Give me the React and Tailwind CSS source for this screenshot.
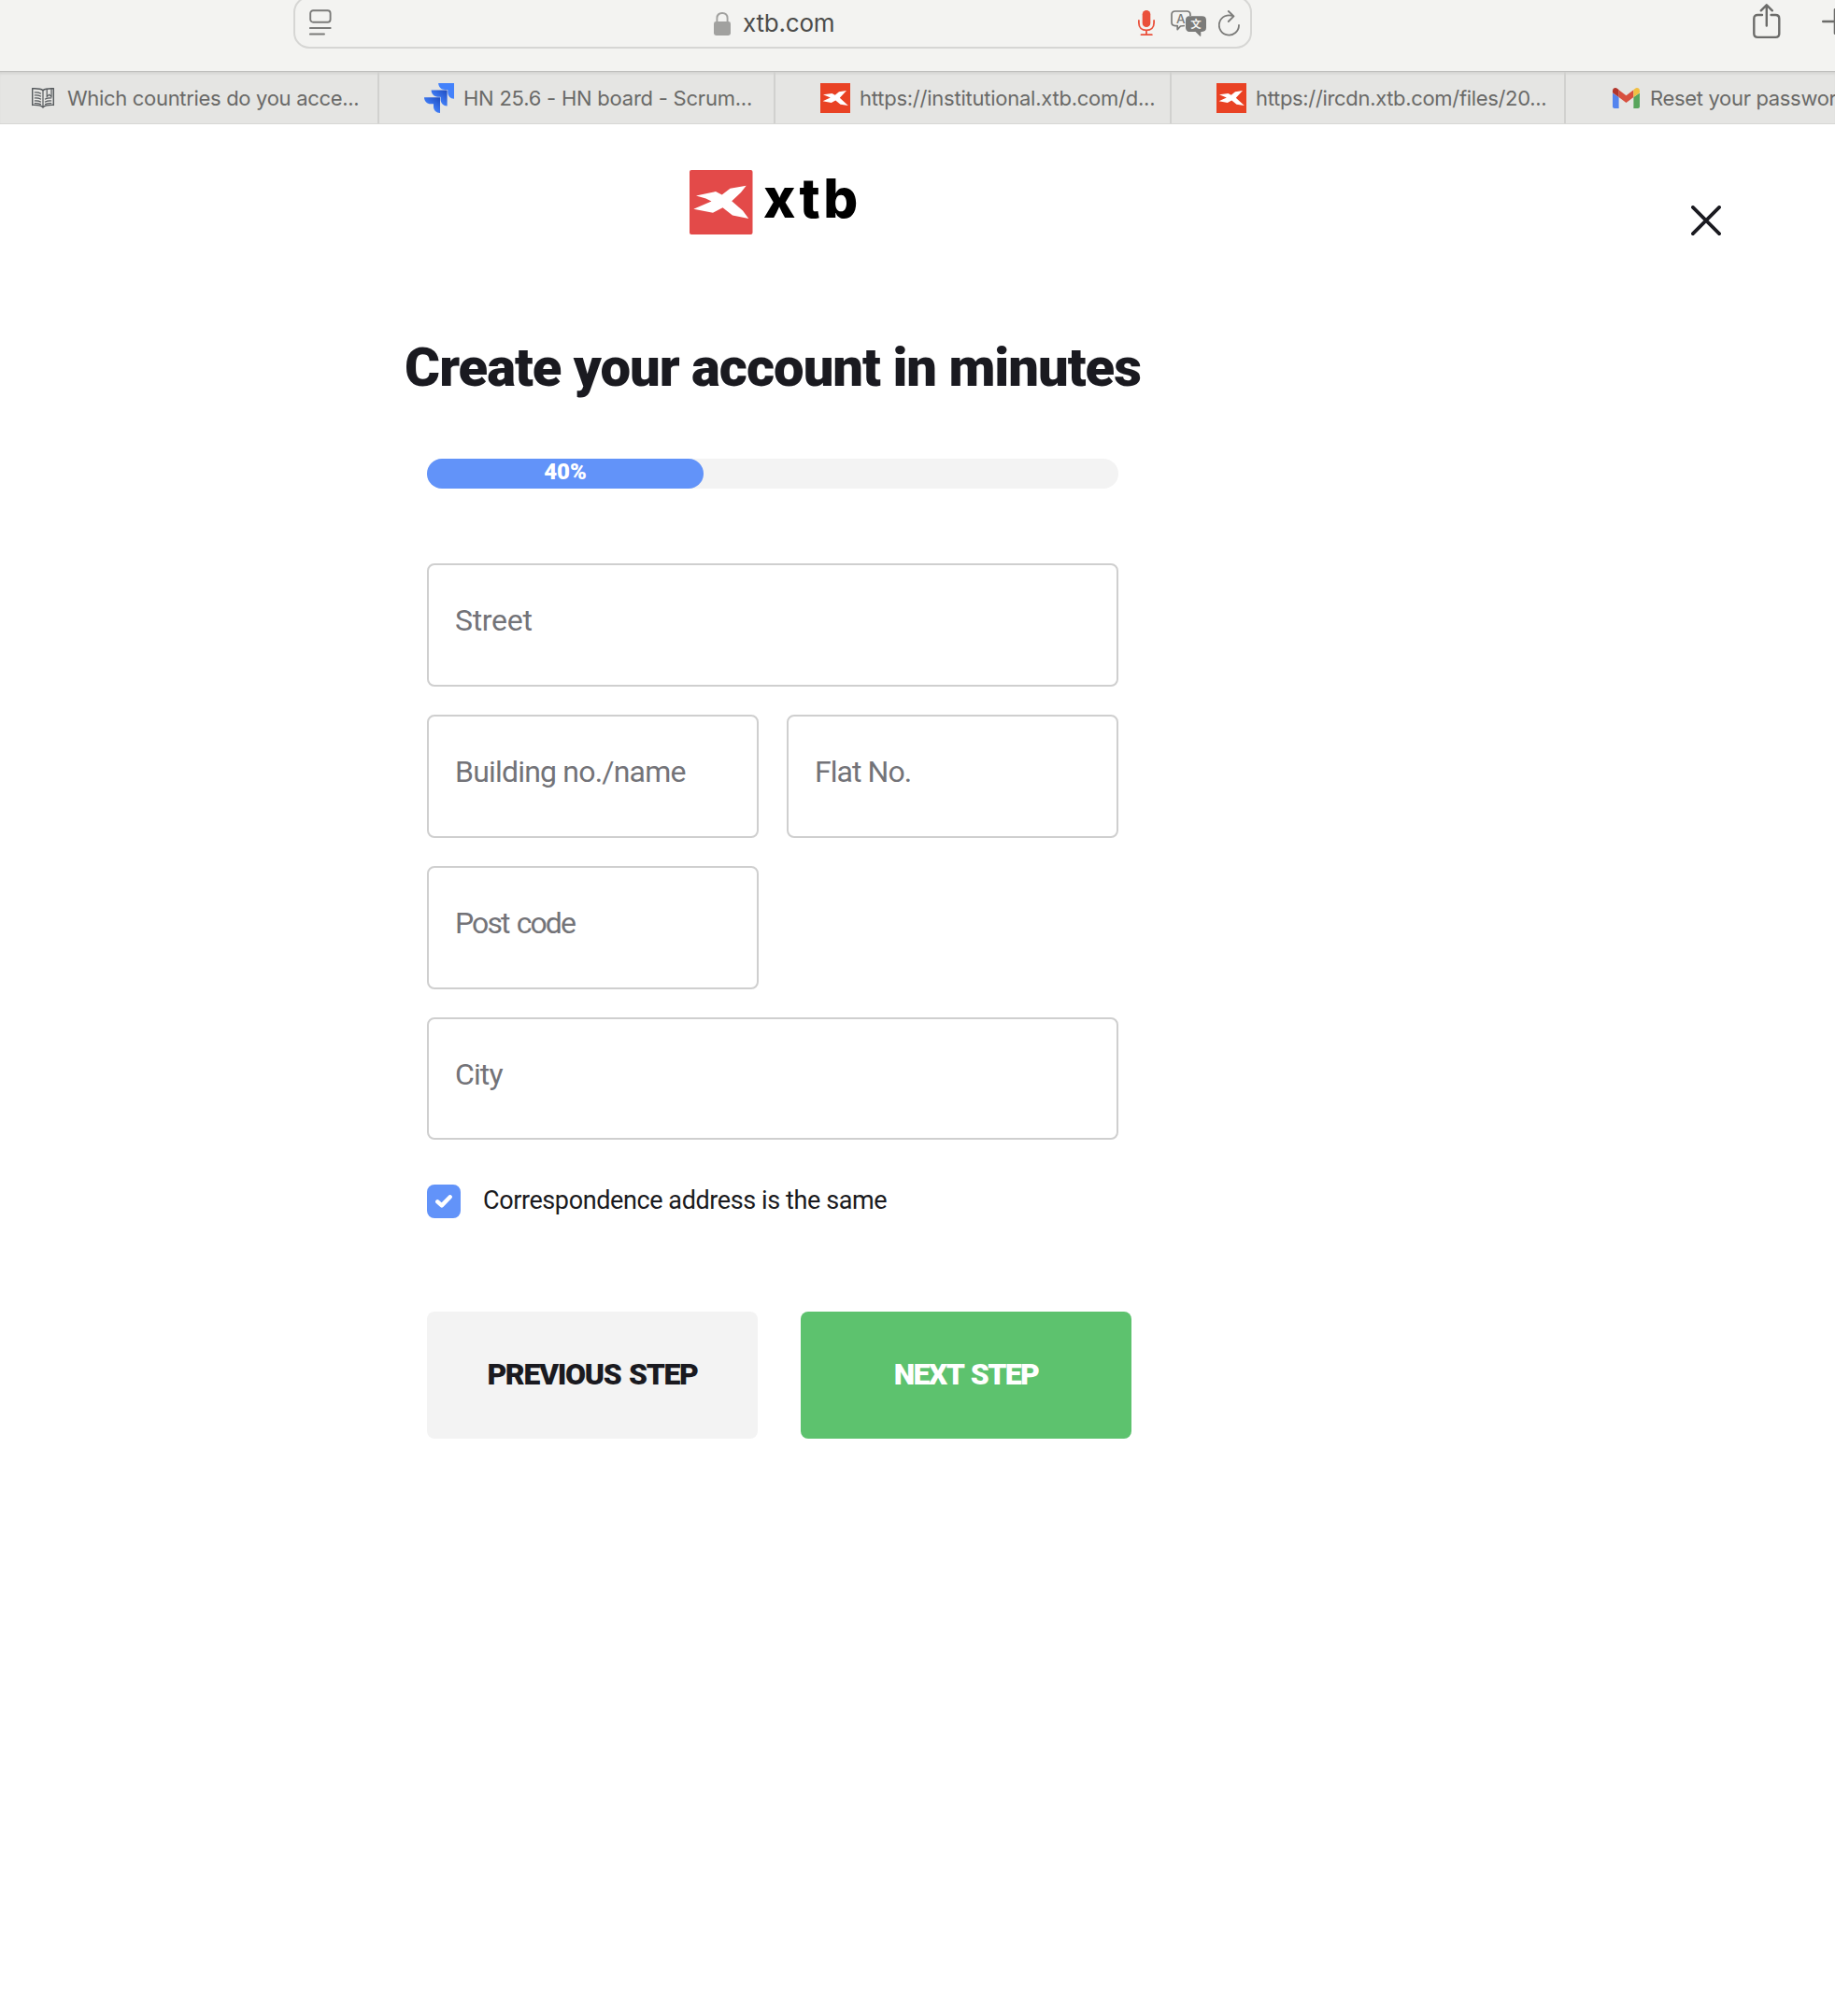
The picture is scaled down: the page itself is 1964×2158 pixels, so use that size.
function ReaderIcon() {
  return (
    <svg width="24" height="28" viewBox="0 0 24 28" fill="none" stroke="#7b7b79" strokeWidth="1.9">
      <rect x="1.2" y="1.2" width="21.4" height="12.6" rx="3" />
      <path d="M0.9 20H22.700M0.9 26.500H16" strokeLinecap="round" />
    </svg>
  );
}

function LockIcon() {
  return (
    <svg width="18" height="25" viewBox="0 0 18 25">
      <path d="M3.4 11.5V6.6C3.4 3 5.8 1 9 1s5.6 2 5.6 5.6v4.9" fill="none" stroke="#a1a19f" strokeWidth="1.9" />
      <rect x="0" y="10" width="18" height="15" rx="2.4" fill="#a1a19f" />
    </svg>
  );
}

function MicIcon() {
  return (
    <svg width="18" height="28" viewBox="0 0 18 28" fill="none" stroke="#ea503b" strokeWidth="1.8" strokeLinecap="round">
      <rect x="4.7" y="0" width="8.6" height="18" rx="4.3" fill="#ea503b" stroke="none" />
      <path d="M0.9 11v2.5C0.9 18.4 4.2 21.400 9 21.400s8.100-3 8.100-7.900V11M9 21.400V26.200M3.500 26.200H14.800" />
    </svg>
  );
}

function TranslateIcon() {
  return (
    <svg width="38" height="28" viewBox="0 0 38 28">
      <path
        d="M15 16.5L10.500 17L7.200 20.600V16.600H4.800C2.300 16.600 1 15.200 1 12.800V4.800C1 2.300 2.300 1 4.800 1H17.200C19.700 1 21 2.300 21 4.800V6"
        fill="none"
        stroke="#7b7b79"
        strokeWidth="1.7"
        strokeLinejoin="round"
      />
      <text x="10.700" y="13.600" textAnchor="middle" fontSize="13.500" fontWeight="500" fontFamily="Inter, sans-serif" fill="#7b7b79">A</text>
      <path
        d="M20.500 6.200H33.500C36.500 6.200 38 7.700 38 10.500V18.600C38 21.500 36.500 23 33.500 23H32.300V27.200C32.300 28 31.700 28.200 31.100 27.600L26.500 23H20.500C17.500 23 16 21.500 16 18.600V10.500C16 7.700 17.500 6.200 20.500 6.200Z"
        fill="#7b7b79"
      />
      <text x="27" y="19" textAnchor="middle" fontSize="11.500" fontWeight="700" fontFamily="'Noto Sans CJK SC', sans-serif" fill="#f3f3f1">文</text>
    </svg>
  );
}

function ReloadIcon() {
  return (
    <svg width="24" height="28" viewBox="0 0 24 28" fill="none" stroke="#7b7b79" strokeWidth="1.8" strokeLinecap="round" strokeLinejoin="round">
      <path d="M22 16A10.600 10.600 0 1 1 15.800 6.300M10.800 1L16.500 6.300L10.800 12" />
    </svg>
  );
}

function ShareIcon() {
  return (
    <svg width="30" height="38" viewBox="0 0 30 38" fill="none" stroke="#6c6c6a" strokeWidth="2.400" strokeLinecap="round" strokeLinejoin="round">
      <path d="M10 12H5.200C2.600 12 1.300 13.300 1.300 15.900V32C1.300 34.600 2.600 35.900 5.200 35.900H24.400C27 35.900 28.300 34.600 28.300 32V15.900C28.300 13.300 27 12 24.400 12H19.600M14.800 23.500V1.500M8.800 7.300L14.800 1.300L20.800 7.300" />
    </svg>
  );
}

function PlusIcon() {
  return (
    <svg width="28" height="28" viewBox="0 0 28 28" fill="none" stroke="#6c6c6a" strokeWidth="2.600" strokeLinecap="round">
      <path d="M1.300 14H26.700M14 1.300V26.700" />
    </svg>
  );
}

function BookIcon() {
  return (
    <svg width="24" height="22" viewBox="0 0 24 22" fill="none" stroke="#55595c" strokeWidth="1.200">
      <path d="M12 2.600C9.500 .8 5 .6 .7 .8V18.400C5 18.200 9.500 18.600 12 20.600C14.500 18.600 19 18.200 23.300 18.400V.8C19 .6 14.500 .8 12 2.600Z" strokeWidth="1.400" />
      <path d="M12 2.600V21.600M2.800 5C5.500 4.800 8 5.200 10 6.200M2.800 8C5.500 7.800 8 8.200 10 9.200M2.800 11C5.500 10.800 8 11.200 10 12.200M2.800 14C5.500 13.800 8 14.200 10 15.200M14 12.200C16 11.200 18.500 10.800 21.200 11M14 15.200C16 14.200 18.500 13.800 21.200 14M2.800 16.600C5.500 16.400 8 16.800 10 17.800M14 17.800C16 16.800 18.500 16.400 21.200 16.600" />
      <path d="M16.200 1.400V9.400L18.600 7.400L21 9.400V1" />
    </svg>
  );
}

function JiraIcon() {
  return (
    <svg width="32" height="32" viewBox="0 0 32 32">
      <defs>
        <linearGradient id="jiraMid" x1="1" y1="0" x2="0.400" y2="0.700">
          <stop offset="0.100" stopColor="#2150c4" />
          <stop offset="1" stopColor="#4482fb" />
        </linearGradient>
      </defs>
      <path d="M15.200 0H32V16.800C28 16.800 25.200 13.500 25.200 9.800V7H22.200C18.300 7 15.200 4.200 15.200 0Z" fill="#4482fb" />
      <path d="M7.600 7.600H24.600V24.500C20.600 24.500 17.600 21.300 17.600 17.500V14.700H14.600C10.700 14.700 7.600 11.700 7.600 7.600Z" fill="url(#jiraMid)" />
      <path d="M0 15.200H17V32C13 32 10 28.900 10 25V22.300H7C3.100 22.300 0 19.300 0 15.200Z" fill="url(#jiraMid)" />
    </svg>
  );
}

function XtbFavicon() {
  return (
    <svg width="32" height="32" viewBox="0 0 32 32">
      <rect width="32" height="32" fill="#e94224" />
      <path d="M3 12.200L12.500 11L15.800 12.800L20 9.200L28 8L20.800 15.800L29.800 24L21.500 22.800L16.300 18.600L11.800 21L2.600 19.200L10.800 15.600Z" fill="#fff" />
    </svg>
  );
}

function GmailIcon() {
  return (
    <svg width="29" height="22" viewBox="0 0 29 22">
      <path d="M0 5.500L6.600 10V22H2C.8 22 0 21.200 0 20Z" fill="#5484ee" />
      <path d="M29 5.500L22.400 10V22H27C28.200 22 29 21.200 29 20Z" fill="#58a55c" />
      <path d="M6.600 2.300L14.500 8.200L22.400 2.300V10L14.500 16L6.600 10Z" fill="#d8503f" />
      <path d="M0 3.200C0 .4 3-1 5.200 .9L6.600 2V10L0 5.200Z" fill="#b3362c" />
      <path d="M29 3.200C29 .4 26-1 23.800 .9L22.400 2V10L29 5.200Z" fill="#f1bf42" />
    </svg>
  );
}

function XtbMark() {
  return (
    <svg width="68" height="69" viewBox="0 0 68 69">
      <rect width="67.500" height="69" rx="2" fill="#e34a49" />
      <path d="M7 27.600L28 23L34.700 26.500L43.500 19.800L60.700 16.800L55 24L45.200 33.200L57 43.500L63.300 52L46 48.500L35.500 40.200L25 45.800L4.300 41.700L23.500 33.500L17.500 30.500Z" fill="#fff" />
    </svg>
  );
}

function CloseIcon() {
  return (
    <svg width="32" height="32" viewBox="0 0 32 32" fill="none" stroke="#1a1a20" strokeWidth="3.700" strokeLinecap="round">
      <path d="M1.900 1.900L30.100 30.100M30.100 1.900L1.900 30.100" />
    </svg>
  );
}

function Tab({ icon, label, className }) {
  return (
    <div className={`flex shrink-0 items-center whitespace-nowrap border-[#d1d1cf] text-[22px] text-[#6a6a68] ${className}`}>
      {icon}
      <span className="pt-[2px]">{label}</span>
    </div>
  );
}

function BrowserChrome() {
  return (
    <header className="h-[133px] overflow-hidden font-['Inter',sans-serif]">
      <div className="flex h-[76px] items-start overflow-hidden bg-[#f3f3f1] pl-[314px]">
        <div className="-mt-1 flex h-14 w-[1026px] shrink-0 items-center rounded-[17px] border-2 border-[#d6d6d4] pl-[15px]">
          <ReaderIcon />
          <div className="ml-[409px] pt-[3px]">
            <LockIcon />
          </div>
          <span className="ml-[13px] w-[100px] pt-[2px] text-[26px] leading-[32px] tracking-[-0.2px] text-[#4c4c4a]">xtb.com</span>
          <div className="ml-[323px] flex items-center pt-[2px]">
            <MicIcon />
            <div className="ml-[17px]">
              <TranslateIcon />
            </div>
            <div className="ml-[13px]">
              <ReloadIcon />
            </div>
          </div>
        </div>
        <div className="ml-[536px] mt-1 shrink-0">
          <ShareIcon />
        </div>
        <div className="ml-[44px] mt-[9px] shrink-0">
          <PlusIcon />
        </div>
      </div>
      <div className="flex h-[57px] overflow-hidden border-b border-t border-b-[#d6d6d4] border-t-[#bfbfbd] bg-[#e5e5e3] shadow-[inset_0_3px_3px_-1px_rgba(0,0,0,0.08)]">
        <Tab icon={<BookIcon />} label="Which countries do you acce..." className="w-[406px] gap-[14px] border-r-2 pl-[34px] tracking-[-0.32px]" />
        <Tab icon={<JiraIcon />} label="HN 25.6 - HN board - Scrum..." className="w-[424px] gap-[10px] border-r-2 pl-[48px] tracking-[-0.23px]" />
        <Tab icon={<XtbFavicon />} label="https://institutional.xtb.com/d..." className="w-[424px] gap-[10px] border-r-2 pl-[48px] tracking-[-0.24px]" />
        <Tab icon={<XtbFavicon />} label="https://ircdn.xtb.com/files/20..." className="w-[422px] gap-[10px] border-r-2 pl-[48px] tracking-[-0.33px]" />
        <Tab icon={<GmailIcon />} label="Reset your passwor" className="w-[422px] gap-[11px] pl-[50px] tracking-[-0.33px]" />
      </div>
    </header>
  );
}

function Field({ label, className }) {
  return (
    <div className={`flex items-center rounded-lg border-2 border-[#cfcfcf] pb-[10px] pl-[28px] text-[32px] text-[#737378] ${className}`}>
      {label}
    </div>
  );
}

export default function App() {
  return (
    <div className="min-h-[2158px] w-[1964px] overflow-hidden bg-white font-['Roboto',sans-serif]">
      <BrowserChrome />
      <div className="mt-[49px] flex h-[69px] items-center pl-[738px]">
        <XtbMark />
        <span className="ml-[11px] w-[105px] pb-[10px] font-['Inter',sans-serif] text-[58px] font-extrabold leading-[60px] tracking-[3.4px] text-black">xtb</span>
        <button className="ml-[888px] mt-[39px]">
          <CloseIcon />
        </button>
      </div>
      <main className="ml-[457px] w-[740px]">
        <h1 className="-mx-10 mt-[112px] whitespace-nowrap text-center text-[58px] font-black leading-[60px] tracking-[-1.03px] text-[#1a1a20]">
          Create your account in minutes
        </h1>
        <div className="mt-[68px] h-8 rounded-full bg-[#f3f3f3]">
          <div className="flex h-8 w-2/5 items-center justify-center rounded-full bg-[#6293f9] pb-[4px] text-2xl font-black leading-7 text-white">40%</div>
        </div>
        <div className="mt-20 grid grid-cols-2 gap-[30px]">
          <Field label="Street" className="col-span-2 h-[132px] tracking-[-0.3px]" />
          <Field label="Building no./name" className="h-[132px] tracking-[-0.8px]" />
          <Field label="Flat No." className="h-[132px] tracking-[-0.95px]" />
          <Field label="Post code" className="h-[132px] tracking-[-1.9px] [word-spacing:2px]" />
          <Field label="City" className="col-span-2 h-[131px] tracking-[-0.9px]" />
        </div>
        <label className="mt-12 flex h-9 items-center">
          <span className="flex h-9 w-9 items-center justify-center rounded-lg bg-[#6293f9]">
            <svg width="18" height="14" viewBox="0 0 18 14" fill="none" stroke="#fff" strokeWidth="4.400" strokeLinecap="round" strokeLinejoin="round">
              <path d="M2.300 7.300L6.800 11.400L15.700 2.300" />
            </svg>
          </span>
          <span className="ml-[24px] pb-[3px] text-[27px] leading-8 tracking-[-0.4px] text-[#1a1a20]">Correspondence address is the same</span>
        </label>
        <div className="mt-[100px] flex w-[754px] justify-between text-[32px] font-black">
          <button className="h-[136px] w-[354px] rounded-lg bg-[#f3f3f3] pb-[2px] tracking-[-1.35px] text-[#1a1a20] [word-spacing:2px]">PREVIOUS STEP</button>
          <button className="h-[136px] w-[354px] rounded-lg bg-[#5dc26e] pb-[2px] tracking-[-1.6px] text-white [word-spacing:2px]">NEXT STEP</button>
        </div>
      </main>
    </div>
  );
}
